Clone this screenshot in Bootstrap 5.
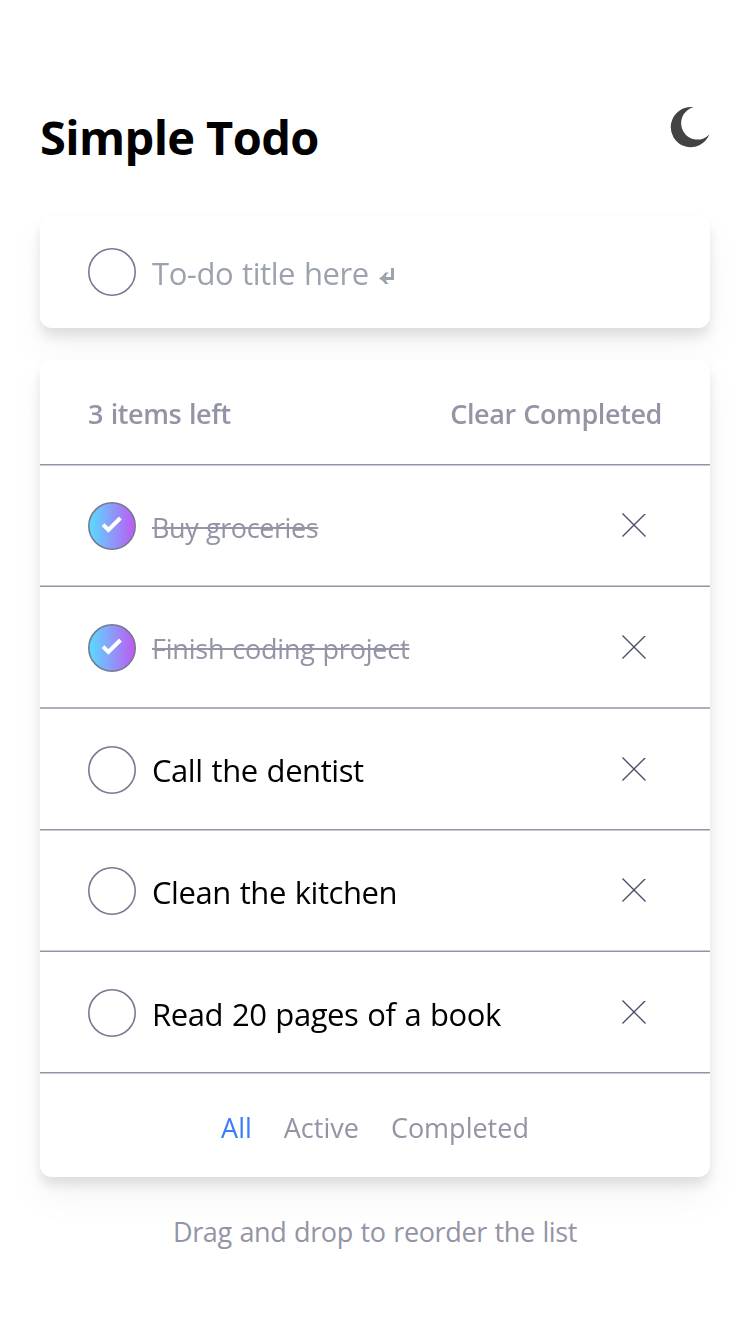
<!DOCTYPE html>
<html lang="en">
<head>
<meta charset="utf-8">
<meta name="viewport" content="width=device-width, initial-scale=1">
<title>Simple Todo</title>
<link href="https://cdn.jsdelivr.net/npm/bootstrap@5.3.0/dist/css/bootstrap.min.css" rel="stylesheet">
<style>
  body { font-family: "Open Sans", "Noto Sans", sans-serif; color: #000; background: #fff; min-height: 1334px; overflow: hidden; }
  main { padding: 104px 40px 0; }
  .page-title { font-size: 47px; line-height: 64px; font-weight: 700; letter-spacing: -.62px; padding-top: 1px; }
  .top-bar { height: 112px; }
  .panel { border-radius: 12px; background: #fff; filter: drop-shadow(0 20px 16px rgb(0 0 0 / .04)) drop-shadow(0 8px 6px rgb(0 0 0 / .1)); }
  .new-todo { height: 112px; padding: 0 48px; margin-bottom: 32px; }
  .muted { color: #9394a5; }
  .task { font-size: 31px; line-height: 46px; letter-spacing: -.44px; word-spacing: 1.3px; padding-top: 2px; }
  .hint { color: #9ca3af; }
  .task-done { font-size: 27px; line-height: 40px; color: #9394a5; text-decoration: line-through; letter-spacing: -.4px; word-spacing: 1px; padding-top: 3px; }
  .task-done.long { letter-spacing: -.2px; }
  .meta { height: 104px; padding: 4px 48px 0; font-size: 27px; font-weight: 600; letter-spacing: -.4px; word-spacing: 1px; }
  .todo-row { padding: 3px 64px 0 48px; height: 122px; }
  .todo-row.short { height: 121px; }
  .cross { margin-bottom: 2px; }
  .rule-a { background: linear-gradient(#9394a5 1px, #c9c9d2 1px) top / 100% 2px no-repeat; }
  .rule-b { background: linear-gradient(#c9c9d2 1px, #9394a5 1px) top / 100% 2px no-repeat; }
  .rule-c { background: linear-gradient(#aeafbb 1px, #aeafbb 1px) top / 100% 2px no-repeat; }
  .rule-c .task { padding-top: 0; }
  .filters { height: 105px; padding-top: 7px; gap: 32px; font-size: 27px; letter-spacing: 0; }
  .filters a { color: #9394a5; text-decoration: none; }
  .filters a.active { color: #3a7cfd; }
  .drag-note { font-size: 27px; line-height: 40px; margin-top: 35px; letter-spacing: -.37px; word-spacing: 1px; }
  svg { flex: none; display: block; }
  .enter-key { margin: 8px 0 0 10px; }
</style>
</head>
<body>
<svg width="0" height="0" class="position-absolute">
  <defs>
    <linearGradient id="fill"><stop stop-color="#57ddff"/><stop offset="1" stop-color="#c058f3"/></linearGradient>
    <symbol id="ring" viewBox="0 0 48 48"><circle cx="24" cy="24" r="23.2" fill="none" stroke="#777a92" stroke-width="1.6"/></symbol>
    <symbol id="done" viewBox="0 0 48 48"><circle cx="24" cy="24" r="23.2" fill="url(#fill)" stroke="#777a92" stroke-width="1.6"/><path d="M15 22.6l5.4 5.4 12-12" fill="none" stroke="#fff" stroke-width="4"/></symbol>
    <symbol id="cross" viewBox="0 0 17.678 17.678"><path fill="#494c6b" d="M16.97 0l.708.707L9.546 8.84l8.132 8.132-.707.707-8.132-8.132-8.132 8.132L0 16.97l8.132-8.132L0 .707.707 0 8.839 8.132 16.971 0z"/></symbol>
  </defs>
</svg>
<main>
  <header class="top-bar d-flex justify-content-between align-items-start">
    <h1 class="page-title mb-0">Simple Todo</h1>
    <svg width="40" height="46" viewBox="670 104 40 46"><path fill="#434343" d="M693.5 107.300A20 20 0 1 0 709.3 134.600A16.4 16.4 0 1 1 693.5 107.300Z"/></svg>
  </header>
  <section class="panel new-todo d-flex align-items-center gap-3">
    <svg width="48" height="48"><use href="#ring"/></svg>
    <div class="d-flex align-items-center"><span class="task hint">To-do title here</span>
    <svg width="16" height="18" viewBox="0 0 16 18" class="enter-key"><path d="M12 1h3v12H7q.3 2.600 2.800 4H6.200Q4 13.500 0 11.500Q4 9.500 6.200 5.500h3.600Q7.300 7.300 7 10h5z" fill="#9ca3af"/></svg></div>
  </section>
  <section class="panel">
    <div class="meta muted d-flex justify-content-between align-items-center"><span>3 items left</span><span>Clear Completed</span></div>
    <div class="todo-row short rule-a d-flex align-items-center gap-3"><svg width="48" height="48"><use href="#done"/></svg><span class="task-done flex-grow-1">Buy groceries</span><svg class="cross" width="24" height="24"><use href="#cross"/></svg></div>
    <div class="todo-row rule-b d-flex align-items-center gap-3"><svg width="48" height="48"><use href="#done"/></svg><span class="task-done long flex-grow-1">Finish coding project</span><svg class="cross" width="24" height="24"><use href="#cross"/></svg></div>
    <div class="todo-row rule-c d-flex align-items-center gap-3"><svg width="48" height="48"><use href="#ring"/></svg><span class="task flex-grow-1">Call the dentist</span><svg class="cross" width="24" height="24"><use href="#cross"/></svg></div>
    <div class="todo-row short rule-a d-flex align-items-center gap-3"><svg width="48" height="48"><use href="#ring"/></svg><span class="task flex-grow-1">Clean the kitchen</span><svg class="cross" width="24" height="24"><use href="#cross"/></svg></div>
    <div class="todo-row rule-b d-flex align-items-center gap-3"><svg width="48" height="48"><use href="#ring"/></svg><span class="task flex-grow-1">Read 20 pages of a book</span><svg class="cross" width="24" height="24"><use href="#cross"/></svg></div>
    <nav class="filters rule-a d-flex justify-content-center align-items-center"><a class="active" href="#">All</a><a href="#">Active</a><a href="#">Completed</a></nav>
  </section>
  <p class="drag-note muted text-center mb-0">Drag and drop to reorder the list</p>
</main>
<script src="https://cdn.jsdelivr.net/npm/bootstrap@5.3.0/dist/js/bootstrap.bundle.min.js"></script>
</body>
</html>
